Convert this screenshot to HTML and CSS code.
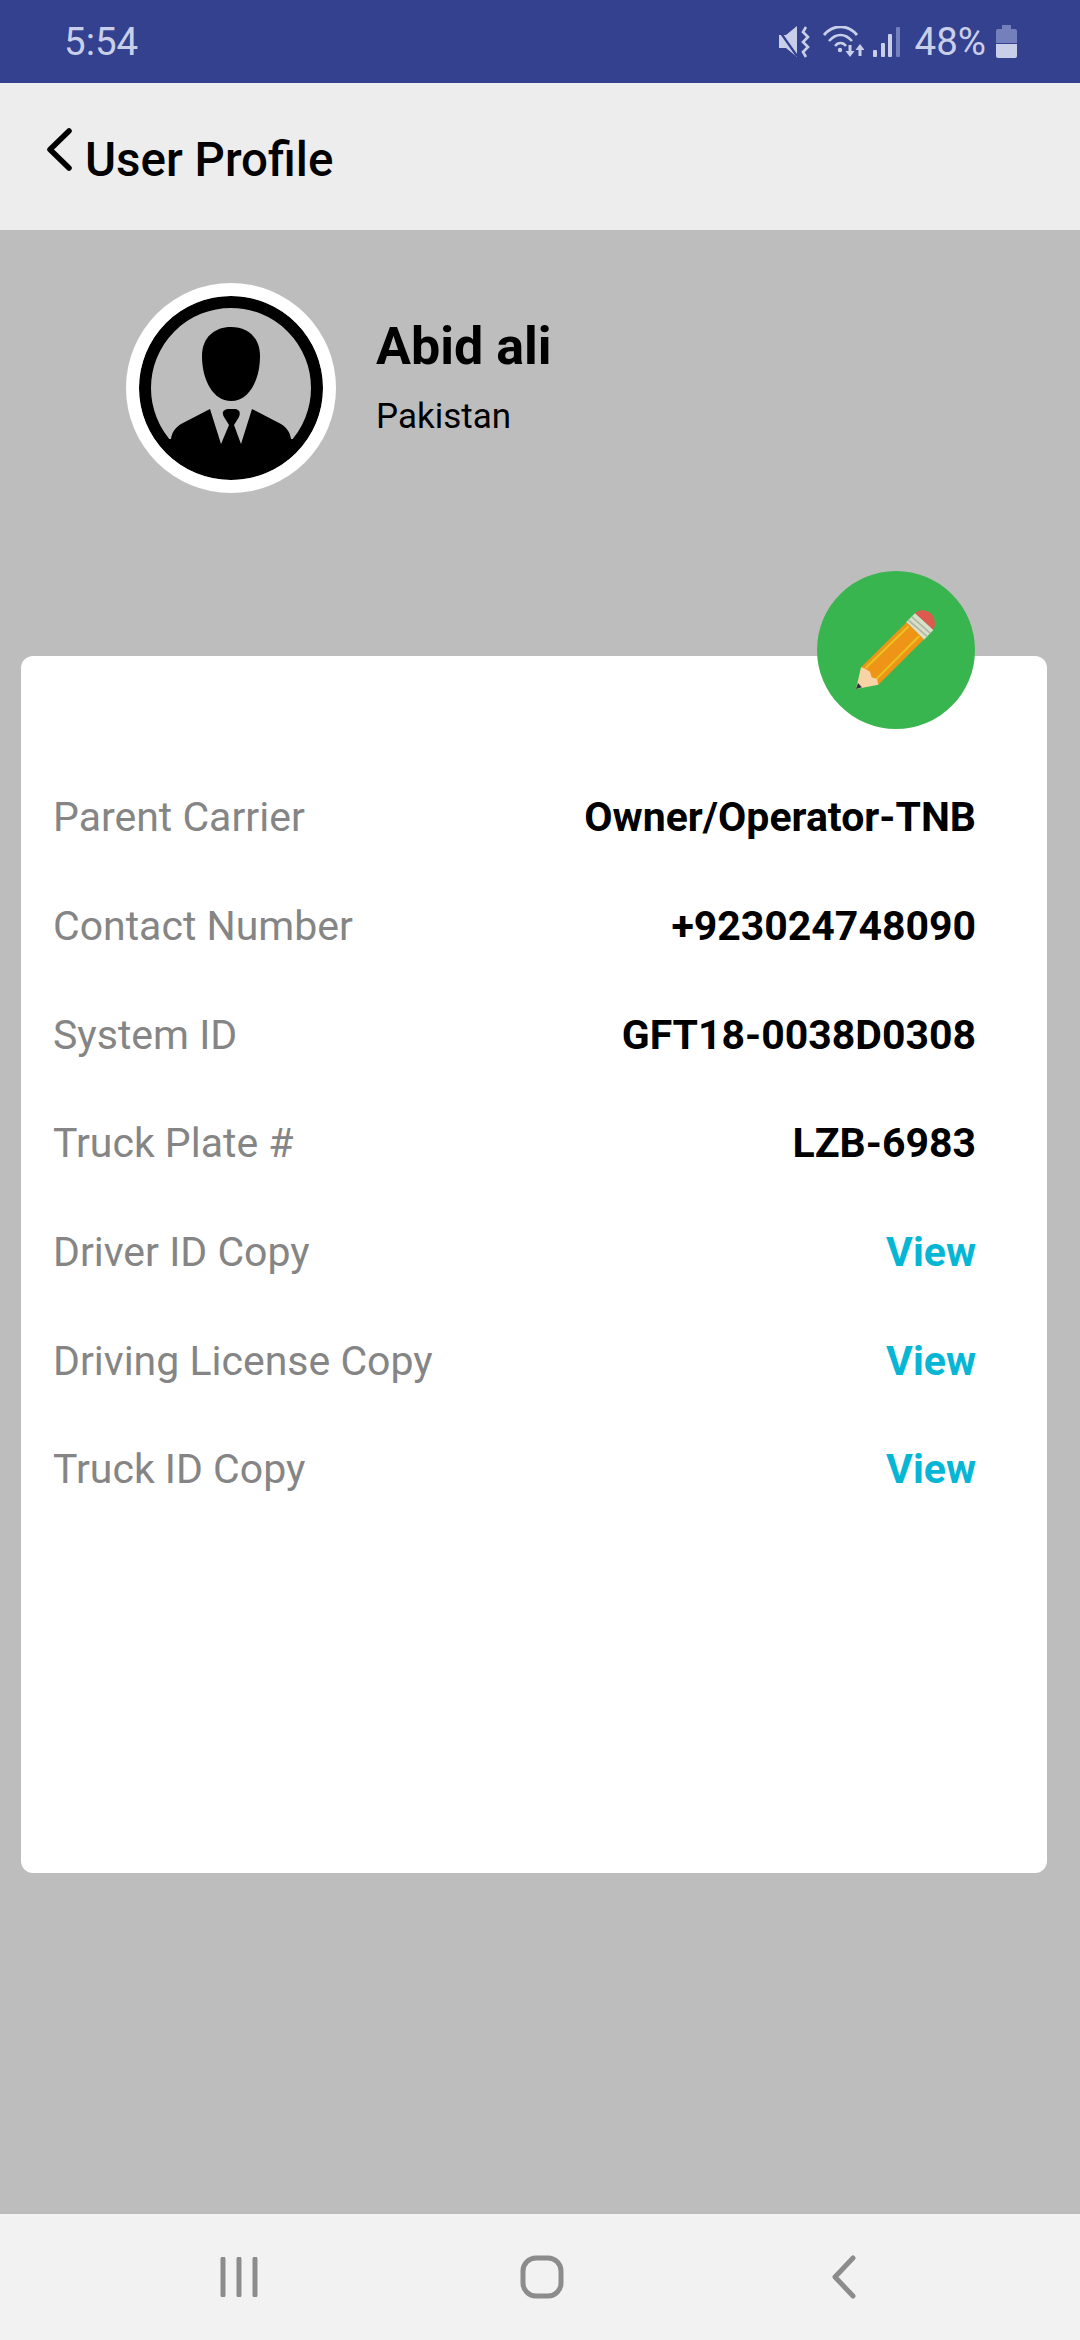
FILE: index.html
```html
<!DOCTYPE html>
<html lang="en">
<head>
  <meta charset="UTF-8" />
  <meta name="viewport" content="width=device-width, initial-scale=1.0" />
  <title>User Profile</title>
  <link rel="stylesheet" href="styles.css">
</head>
<body>
  <div class="status-bar">
    <span class="status-time">5:54</span>
    <div class="status-icons">
      <svg class="icon-mute" viewBox="0 0 32 32">
        <path d="M1 9h7L19 0v31L8 22H1z" class="fill"/>
        <path d="M0 3l19 27" stroke="#33418f" stroke-width="2.200" fill="none"/>
        <path d="M28 1l-3 5 5 5-5 5 5 5-5 5 3 5" class="line" stroke-width="2.600"/>
      </svg>
      <svg class="icon-wifi" viewBox="0 0 42 31">
        <path d="M2 9C11 -2 26 -2 35 9" class="line" stroke-width="2.800"/>
        <path d="M7 15C14 7 23 7 30 15" class="line" stroke-width="2.600"/>
        <path d="M13 20c3-4 8-4 11 0" class="line" stroke-width="2.400"/>
        <circle cx="18" cy="24" r="2.200" class="fill"/>
        <path d="M26.500 19h3v6h3l-4.500 6-4.500-6h3zM39.500 30h-3v-6h-3l4.500-6 4.500 6h-3z" class="fill"/>
      </svg>
      <svg class="icon-signal" viewBox="0 0 28 31">
        <rect x="0" y="24" width="4" height="7" rx="1" class="fill"/>
        <rect x="8" y="17" width="4" height="14" rx="1" class="fill"/>
        <rect x="15" y="8" width="4" height="23" rx="1" class="fill"/>
        <rect x="23" y="1" width="4" height="30" rx="1" class="dim"/>
      </svg>
      <span class="status-battery">48%</span>
      <svg class="icon-battery" viewBox="0 0 21 33">
        <path d="M6 0h9v4h4a2 2 0 0 1 2 2v12H0V6a2 2 0 0 1 2-2h4z" class="dim"/>
        <path d="M0 19h21v12a2 2 0 0 1-2 2H2a2 2 0 0 1-2-2z" class="fill"/>
      </svg>
    </div>
  </div>

  <header class="app-bar">
    <svg class="back-icon" viewBox="0 0 26 44">
      <path d="M23 3L4 21.500 23 40" />
    </svg>
    <h1>User Profile</h1>
  </header>

  <main class="content">
    <section class="profile">
      <div class="avatar">
        <svg viewBox="0 0 184 184">
          <circle cx="92" cy="92" r="86" fill="none" stroke="#000" stroke-width="12"/>
          <path d="M92 31C76 31 63 41 63 60C63 84 74 105 92 105C110 105 121 84 121 60C121 41 108 31 92 31z"/>
          <path d="M32 143C33 136 36 132 42 128L71 113L82 148L90 129L85 121C82 116 85 113 90 113L95 113C100 113 102 116 100 121L95 129L102 148L113 113L142 128C148 132 151 136 152 143L156 143A82 82 0 0 1 28 143z"/>
        </svg>
      </div>
      <div class="profile-text">
        <div class="profile-name">Abid ali</div>
        <div class="profile-country">Pakistan</div>
      </div>
    </section>

    <section class="card">
      <button class="edit-btn" type="button">
        <svg viewBox="51 33 474 470">
          <path d="M345 158c12-12 32-12 47-0 14 14 16 36 8 50z" fill="#dc5a4e"/>
          <path d="M318 185l27-27 55 50-28 29z" fill="#d9dfc9"/>
          <path d="M325 178l57 50M335 168l56 50" stroke="#aeb8a4" stroke-width="5" fill="none"/>
          <path d="M183 320L320 185l52 51L235 372z" fill="#ee9518"/>
          <path d="M197 322L326 197M228 356L358 226" stroke="#e9c41f" stroke-width="6" fill="none"/>
          <path d="M183 320l-15 65 67-13-4-17-16-5-5-17-17-10z" fill="#f9d3a5"/>
          <path d="M174 367l-6 18 18-5z" fill="#2f3640"/>
        </svg>
      </button>
      <dl class="details">
        <div class="row"><dt>Parent Carrier</dt><dd>Owner/Operator-TNB</dd></div>
        <div class="row"><dt>Contact Number</dt><dd>+923024748090</dd></div>
        <div class="row"><dt>System ID</dt><dd>GFT18-0038D0308</dd></div>
        <div class="row"><dt>Truck Plate #</dt><dd>LZB-6983</dd></div>
        <div class="row"><dt>Driver ID Copy</dt><dd class="link">View</dd></div>
        <div class="row"><dt>Driving License Copy</dt><dd class="link">View</dd></div>
        <div class="row"><dt>Truck ID Copy</dt><dd class="link">View</dd></div>
      </dl>
    </section>
  </main>

  <nav class="nav-bar">
    <svg class="nav-recents" viewBox="0 0 40 40">
      <path d="M3 2v36M19 2v36M35 2v36"/>
    </svg>
    <svg class="nav-home" viewBox="0 0 44 44">
      <rect x="3" y="3" width="38" height="38" rx="13"/>
    </svg>
    <svg class="nav-back" viewBox="0 0 28 44">
      <path d="M23 3L5 22l18 19"/>
    </svg>
  </nav>
</body>
</html>
```

FILE: styles.css
```css
/* Reset and base styling */
* { box-sizing: border-box; margin: 0; padding: 0; }
html, body { height: 100%; }
body {
  width: 1080px;
  height: 2340px;
  display: flex;
  flex-direction: column;
  font-family: Roboto, "Liberation Sans", sans-serif;
  background: #bdbdbd;
  color: #000;
  overflow: hidden;
}

/* Status bar */
.status-bar {
  flex: 0 0 83px;
  display: flex;
  justify-content: space-between;
  align-items: center;
  padding: 0 63px 0 64px;
  background: #33418f;
  color: #c9cfe8;
  font-size: 38.500px;
}
.status-icons { display: flex; align-items: center; }
.status-icons .fill { fill: #c9cfe8; }
.status-icons .dim { fill: #7480bb; }
.status-icons .line { fill: none; stroke: #c9cfe8; }
.icon-mute { width: 32px; height: 32px; margin-right: 12px; }
.icon-wifi { width: 42px; height: 31px; margin-right: 9px; }
.icon-signal { width: 28px; height: 31px; margin-right: 14px; }
.icon-battery { width: 21px; height: 33px; margin-left: 10px; }

/* App bar */
.app-bar {
  flex: 0 0 147px;
  display: flex;
  align-items: center;
  padding: 0 0 0 46px;
  background: #ededed;
}
.back-icon {
  width: 26px;
  height: 44px;
  margin: 0 13px 14px 0;
  fill: none;
  stroke: #000;
  stroke-width: 5.500;
  stroke-linecap: round;
  stroke-linejoin: round;
}
.app-bar h1 { font-size: 47.500px; font-weight: 500; padding-top: 6px; }

/* Main area */
.content {
  flex: 1;
  display: flex;
  flex-direction: column;
  padding: 53px 33px 0 21px;
}
.profile { display: flex; align-items: center; padding-left: 105px; }
.avatar {
  width: 210px;
  height: 210px;
  border-radius: 50%;
  background: #fff;
  display: flex;
  align-items: center;
  justify-content: center;
}
.avatar svg { width: 184px; height: 184px; display: block; border-radius: 50%; background: #bdbdbd; }
.profile-text { margin: 0 0 24px 40px; }
.profile-name { font-size: 52px; font-weight: 700; margin-bottom: 19px; }
.profile-country { font-size: 35px; }

/* Card */
.card {
  position: relative;
  margin-top: 163px;
  height: 1217px;
  background: #fff;
  border-radius: 12px;
  padding: 107px 71px 0 32px;
}
.edit-btn {
  position: absolute;
  top: -85px;
  right: 72px;
  width: 158px;
  height: 158px;
  border: none;
  border-radius: 50%;
  background: #39b54f;
}
.edit-btn svg { width: 158px; height: 158px; display: block; }
.details { display: flex; flex-direction: column; }
.row {
  height: 108.700px;
  display: flex;
  align-items: center;
  justify-content: space-between;
  font-size: 41px;
}
.row dt { color: #858585; }
.row dd { font-weight: 700; }
.row .link { color: #06b6d4; }

/* Bottom navigation */
.nav-bar {
  flex: 0 0 126px;
  display: flex;
  align-items: center;
  background: #f2f2f2;
}
.nav-bar svg {
  fill: none;
  stroke: #8c8c8c;
  stroke-linecap: round;
  stroke-linejoin: round;
}
.nav-recents { width: 40px; height: 40px; margin-left: 220px; stroke-width: 5; }
.nav-home { width: 44px; height: 44px; margin-left: 260px; stroke-width: 5; }
.nav-back { width: 28px; height: 44px; margin-left: 266px; stroke-width: 5; }
```
